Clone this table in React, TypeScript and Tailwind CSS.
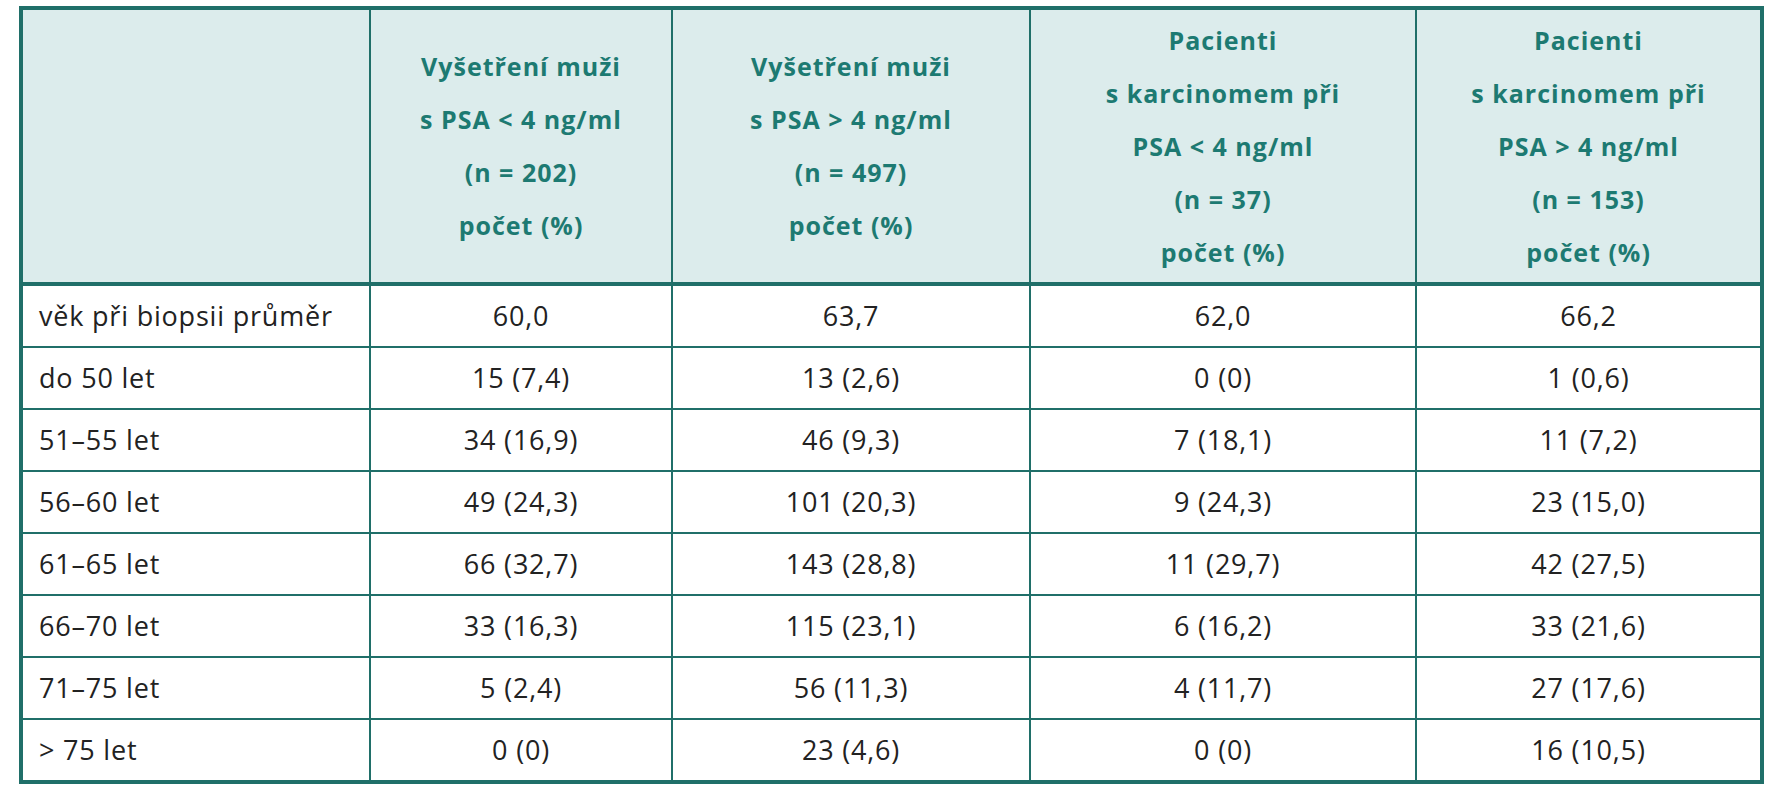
const HEADERS: string[][] = [
  ["Vyšetření muži", "s PSA < 4 ng/ml", "(n = 202)", "počet (%)"],
  ["Vyšetření muži", "s PSA > 4 ng/ml", "(n = 497)", "počet (%)"],
  ["Pacienti", "s karcinomem při", "PSA < 4 ng/ml", "(n = 37)", "počet (%)"],
  ["Pacienti", "s karcinomem při", "PSA > 4 ng/ml", "(n = 153)", "počet (%)"],
];

const ROWS: string[][] = [
  ["věk při biopsii průměr", "60,0", "63,7", "62,0", "66,2"],
  ["do 50 let", "15 (7,4)", "13 (2,6)", "0 (0)", "1 (0,6)"],
  ["51–55 let", "34 (16,9)", "46 (9,3)", "7 (18,1)", "11 (7,2)"],
  ["56–60 let", "49 (24,3)", "101 (20,3)", "9 (24,3)", "23 (15,0)"],
  ["61–65 let", "66 (32,7)", "143 (28,8)", "11 (29,7)", "42 (27,5)"],
  ["66–70 let", "33 (16,3)", "115 (23,1)", "6 (16,2)", "33 (21,6)"],
  ["71–75 let", "5 (2,4)", "56 (11,3)", "4 (11,7)", "27 (17,6)"],
  ["> 75 let", "0 (0)", "23 (4,6)", "0 (0)", "16 (10,5)"],
];

export default function App() {
  return (
    <div className="min-h-screen w-[1783px] h-[800px] bg-white pt-[6px] pl-[19px] font-['Open_Sans',_'Liberation_Sans',_sans-serif]">
      <div className="w-[1745px] border-4 border-[#206f69]">
        <div className="grid grid-cols-[346px_302px_358px_386px_345px]">
          {/* hlavička */}
          <div className="h-[276px] bg-[#dcecec] border-b-4 border-[#206f69]" />
          {HEADERS.map((lines, i) => (
            <div
              key={i}
              className="h-[276px] bg-[#dcecec] border-b-4 border-l-2 border-[#206f69] flex flex-col items-center justify-center text-center text-[25px] leading-[53px] font-bold tracking-[1px] text-[#1d7a72]"
            >
              {lines.map((l, j) => (
                <span key={j} className="whitespace-pre">{l}</span>
              ))}
            </div>
          ))}

          {/* řádky */}
          {ROWS.map((row, r) =>
            row.map((cell, c) => (
              <div
                key={`${r}-${c}`}
                className={`flex items-center text-[27px] tracking-[0.8px] text-[#222222] border-[#206f69] ${
                  r > 0 ? "h-[62px] border-t-2" : "h-[60px]"
                } ${c > 0 ? "border-l-2 justify-center" : "pl-[16px]"}`}
              >
                {cell}
              </div>
            ))
          )}
        </div>
      </div>
    </div>
  );
}
